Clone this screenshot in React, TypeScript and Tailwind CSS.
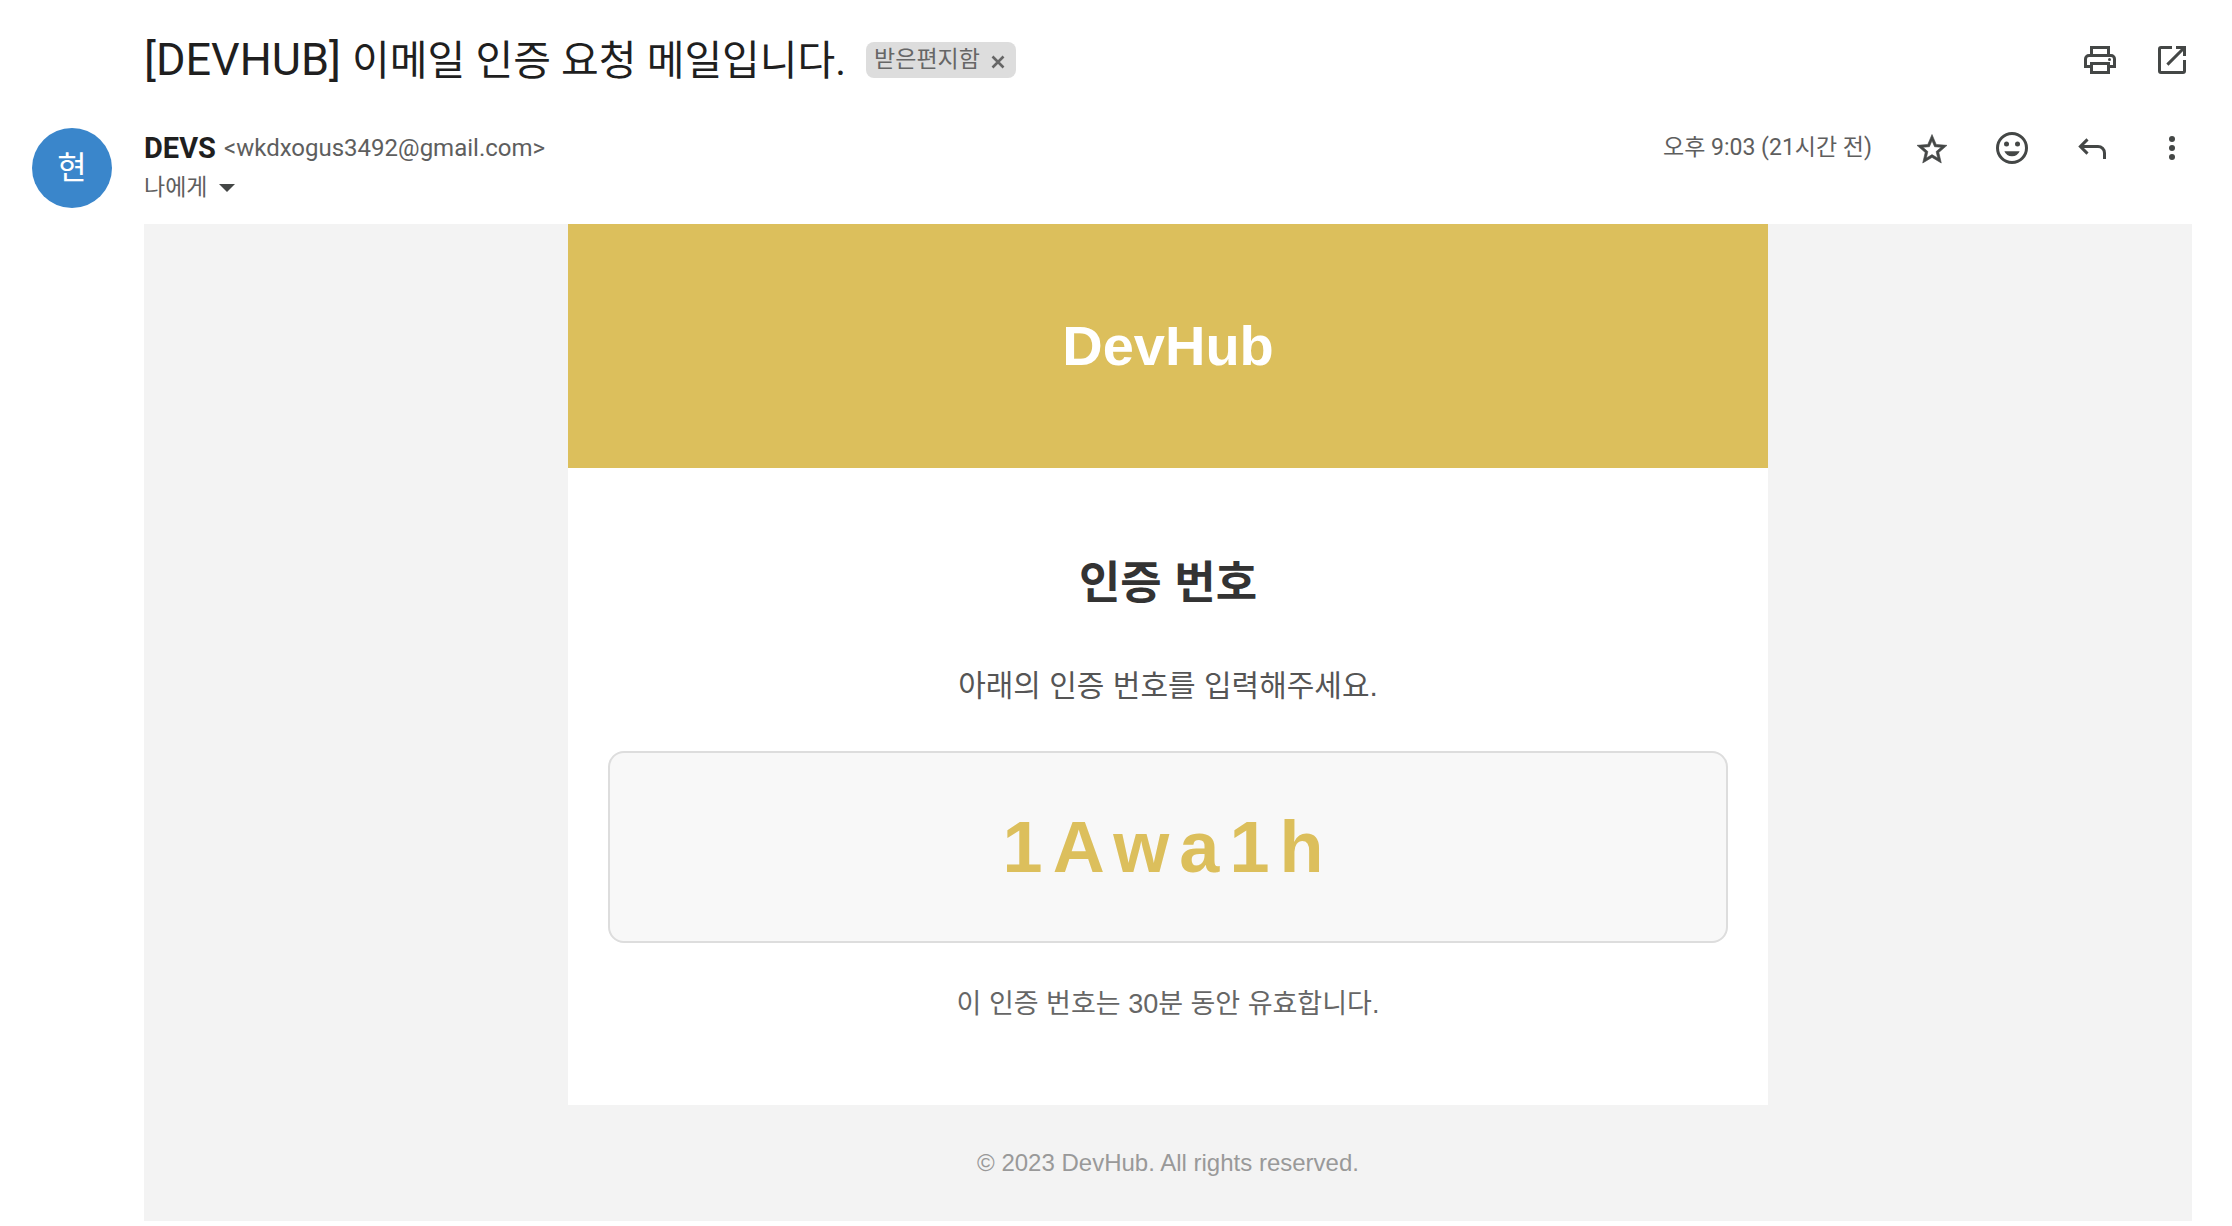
import type { ReactNode } from "react";

function Icon({ className = "size-10", children }: { className?: string; children: ReactNode }) {
  return (
    <svg viewBox="0 0 20 20" className={className} fill="none" stroke="currentColor" strokeWidth="1.5" aria-hidden="true">
      {children}
    </svg>
  );
}

function IconButton({ label, children }: { label: string; children: ReactNode }) {
  return (
    <button type="button" aria-label={label} className="flex size-10 items-center justify-center text-[#444746]">
      {children}
    </button>
  );
}

function PrintIcon() {
  return (
    <Icon>
      <path d="M5.75 7.5V3.75h8.5V7.5M5.5 13.25H2.75V9.5c0-1 .75-1.75 1.75-1.75h11c1 0 1.75.75 1.75 1.75v3.75H14.5" />
      <path d="M5.75 11.75h8.5v4.5h-8.5z" />
      <circle cx="14.75" cy="9.75" r=".75" fill="currentColor" stroke="none" />
    </Icon>
  );
}

function OpenInNewIcon() {
  return (
    <Icon>
      <path d="M10 3.75H4.5a.75.75 0 0 0-.75.75v11c0 .41.34.75.75.75h11a.75.75 0 0 0 .75-.75V10M12 3.75h4.25V8M7.7 12.3l8.3-8.3" />
    </Icon>
  );
}

function StarIcon() {
  return (
    <svg viewBox="0 -1 24 24" className="size-9" fill="currentColor" stroke="currentColor" strokeWidth=".4" aria-hidden="true">
      <path d="M22 9.24l-7.19-.62L12 2 9.19 8.63 2 9.24l5.46 4.73L5.82 21 12 17.27 18.18 21l-1.63-7.03L22 9.24zM12 15.4l-3.76 2.27 1-4.28-3.32-2.88 4.38-.38L12 6.1l1.71 4.04 4.38.38-3.32 2.88 1 4.28L12 15.4z" />
    </svg>
  );
}

function SmileIcon() {
  return (
    <Icon>
      <circle cx="10" cy="10" r="7.25" />
      <g fill="currentColor" stroke="none">
        <circle cx="7.25" cy="8" r="1.25" />
        <circle cx="12.75" cy="8" r="1.25" />
        <path d="M6.2 11.6h7.6a4.1 4.1 0 0 1-7.6 0z" />
      </g>
    </Icon>
  );
}

function ReplyIcon() {
  return (
    <Icon>
      <path d="M7.75 5.7 4.2 9.25l3.55 3.55M4.2 9.25H13a3.25 3.25 0 0 1 3.25 3.25v3" />
    </Icon>
  );
}

function MoreIcon() {
  return (
    <Icon>
      <g fill="currentColor" stroke="none">
        <circle cx="10" cy="5.5" r="1.5" />
        <circle cx="10" cy="10" r="1.5" />
        <circle cx="10" cy="14.5" r="1.5" />
      </g>
    </Icon>
  );
}

export default function App() {
  return (
    <main className="min-h-screen bg-white pb-1 font-['Roboto','Noto_Sans_CJK_KR',sans-serif] text-[#1f1f1f]">
      <header className="flex h-[120px] items-center justify-between pr-10 pl-36">
        <div className="flex items-center gap-5">
          <h1 className="text-[45px] leading-[56px]">
            [DEVHUB] <span className="text-[41px]">이메일 인증 요청 메일입니다.</span>
          </h1>
          <div className="flex h-9 items-center gap-2 rounded-lg bg-[#ddd] px-2 text-[#666]">
            <span className="text-[23px] leading-8">받은편지함</span>
            <button type="button" aria-label="라벨 삭제" className="pt-1">
              <svg viewBox="0 0 20 20" className="size-5" stroke="currentColor" strokeWidth="2.6" aria-hidden="true">
                <path d="m4.5 4.5 11 11m0-11-11 11" />
              </svg>
            </button>
          </div>
        </div>
        <div className="flex gap-8">
          <IconButton label="인쇄"><PrintIcon /></IconButton>
          <IconButton label="새 창에서 열기"><OpenInNewIcon /></IconButton>
        </div>
      </header>

      <section className="flex h-[104px] items-start pr-10 pl-8">
        <div className="mt-2 flex size-20 shrink-0 items-center justify-center rounded-full bg-[#3a86cb] text-[32px] text-white">
          현
        </div>
        <div className="ml-8 flex-1 pt-2 text-2xl text-[#5e5e5e]">
          <p className="flex h-10 items-center gap-2">
            <strong className="text-[29px] text-[#1f1f1f]">DEVS</strong>
            <span>&lt;wkdxogus3492@gmail.com&gt;</span>
          </p>
          <button type="button" className="flex h-10 items-center gap-3">
            <span className="text-[23px]">나에게</span>
            <svg viewBox="0 0 16 8" className="h-2 w-4 text-[#444746]" fill="currentColor" aria-hidden="true">
              <path d="M0 0h16L8 8z" />
            </svg>
          </button>
        </div>
        <div className="flex items-center gap-10 pt-2">
          <time className="text-[23px] text-[#5e5e5e]">오후 9:03 (21시간 전)</time>
          <IconButton label="별표"><StarIcon /></IconButton>
          <IconButton label="반응 추가"><SmileIcon /></IconButton>
          <IconButton label="답장"><ReplyIcon /></IconButton>
          <IconButton label="더보기"><MoreIcon /></IconButton>
        </div>
      </section>

      <article className="mr-10 ml-36 bg-[#f3f3f3] font-['Liberation_Sans','Noto_Sans_CJK_KR',sans-serif]">
        <div className="mx-auto max-w-[1200px] bg-white text-center">
          <h2 className="bg-[#dcbf5c] p-20 text-[56px] leading-[84px] font-bold text-white">DevHub</h2>
          <div className="px-10 py-20">
            <h3 className="text-[45px] leading-[72px] font-bold text-[#333]">인증 번호</h3>
            <p className="mt-10 text-[30px] leading-[51px] text-[#555]">아래의 인증 번호를 입력해주세요.</p>
            <div className="mt-10 rounded-2xl border-2 border-[#ddd] bg-[#f8f8f8] p-10 text-[72px] leading-[108px] font-bold tracking-[10px] text-[#dcbf5c]">
              1Awa1h
            </div>
            <p className="mt-10 text-[27px] leading-[42px] text-[#666]">이 인증 번호는 30분 동안 유효합니다.</p>
          </div>
        </div>
        <footer className="p-10 text-center text-2xl leading-9 text-[#999]">© 2023 DevHub. All rights reserved.</footer>
      </article>
    </main>
  );
}
